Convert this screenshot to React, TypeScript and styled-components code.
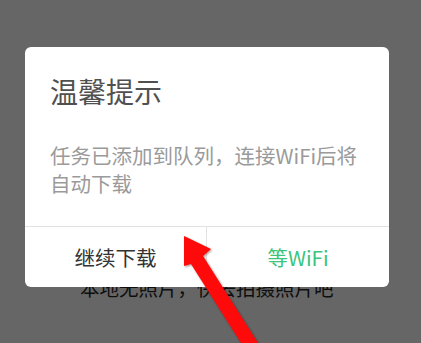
import React from "react";
import styled, { createGlobalStyle } from "styled-components";

const GlobalStyle = createGlobalStyle`
  html, body {
    margin: 0;
    padding: 0;
    background: #666666;
  }
  body {
    font-family: "Noto Sans CJK SC", "Noto Sans", sans-serif;
  }
`;

const Page = styled.div`
  width: 421px;
  height: 343px;
  overflow: hidden;
  position: relative;
  background: #666666;
`;

const EmptyHint = styled.div`
  padding-top: 278px;
  padding-left: 80px;
  font-size: 19.5px;
  line-height: 20px;
  color: #0e0e0e;
  white-space: nowrap;
`;

const Overlay = styled.div`
  position: absolute;
  inset: 0;
  padding: 47px 0 0 25px;
`;

const Dialog = styled.div`
  width: 364px;
  height: 240px;
  background: #ffffff;
  border-radius: 6px;
  overflow: hidden;
  display: flex;
  flex-direction: column;
`;

const Body = styled.div`
  flex: 1;
  padding: 29.5px 20px 0 25px;
`;

const Title = styled.div`
  font-size: 28px;
  line-height: 28px;
  color: #505050;
`;

const Message = styled.div`
  margin-top: 36px;
  font-size: 20.5px;
  line-height: 28px;
  color: #9a9a9a;
`;

const Actions = styled.div`
  height: 60px;
  border-top: 1px solid #e2e2e2;
  display: grid;
  grid-template-columns: 181px 1fr;
`;

const Action = styled.button<{ $primary?: boolean }>`
  border: none;
  background: transparent;
  padding: 0;
  font-family: inherit;
  font-size: 20.5px;
  color: ${(p) => (p.$primary ? "#3cc47c" : "#333333")};
  border-left: ${(p) => (p.$primary ? "1px solid #e2e2e2" : "none")};
  display: flex;
  align-items: center;
  justify-content: center;
`;

const Pointer = styled.svg`
  position: absolute;
  left: 0;
  top: 0;
  width: 421px;
  height: 343px;
  pointer-events: none;
  filter: drop-shadow(1px 1px 1px rgba(80, 0, 0, 0.45));
`;

export default function App() {
  return (
    <Page>
      <GlobalStyle />
      <EmptyHint>本地无照片，快去拍摄照片吧</EmptyHint>
      <Overlay>
        <Dialog>
          <Body>
            <Title>温馨提示</Title>
            <Message>
              任务已添加到队列，连接WiFi后将
              <br />
              自动下载
            </Message>
          </Body>
          <Actions>
            <Action>继续下载</Action>
            <Action $primary>等WiFi</Action>
          </Actions>
        </Dialog>
      </Overlay>
      <Pointer viewBox="0 0 421 343">
        <polygon
          points="184,236 211,249 203,256 258,343 241,343 191,264 184,266"
          fill="#ff0a0a"
        />
      </Pointer>
    </Page>
  );
}
